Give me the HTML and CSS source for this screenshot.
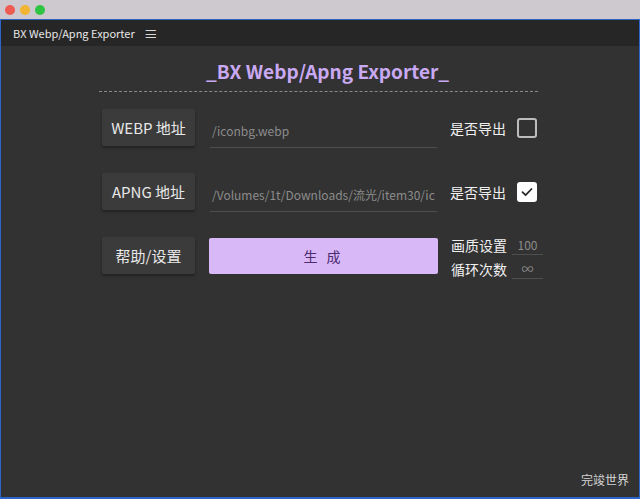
FILE: index.html
```html
<!DOCTYPE html>
<html lang="zh">
<head>
    <meta charset="UTF-8">
    <meta name="viewport" content="width=device-width, initial-scale=1.0">
    <title>BX Webp/Apng Exporter</title>
    <link rel="stylesheet" href="styles.css">
</head>
<body>
    <div class="titlebar">
        <span class="light red"></span>
        <span class="light yellow"></span>
        <span class="light green"></span>
    </div>
    <div class="panel">
        <div class="tabbar">
            <span class="tab-name">BX Webp/Apng Exporter</span>
            <span class="tab-menu">&#8801;</span>
        </div>
        <div class="content">
            <h1 class="heading">_BX Webp/Apng Exporter_</h1>
            <div class="divider"></div>
            <div class="rows">
                <div class="row">
                    <button class="btn">WEBP 地址</button>
                    <input type="text" class="path" value="/iconbg.webp">
                    <div class="export">
                        <span class="label">是否导出</span>
                        <span class="check"></span>
                    </div>
                </div>
                <div class="row">
                    <button class="btn">APNG 地址</button>
                    <input type="text" class="path" value="/Volumes/1t/Downloads/流光/item30/icon">
                    <div class="export">
                        <span class="label">是否导出</span>
                        <span class="check on">
                            <svg width="14" height="14" viewBox="0 0 14 14"><path d="M2.5 7.2 L5.6 10.2 L11.5 4" fill="none" stroke="#2a2a2a" stroke-width="1.8" stroke-linecap="round" stroke-linejoin="round"/></svg>
                        </span>
                    </div>
                </div>
                <div class="row">
                    <button class="btn">帮助/设置</button>
                    <button class="generate">生 成</button>
                    <div class="options">
                        <div class="option">
                            <span class="label">画质设置</span>
                            <input type="text" class="small" value="100">
                        </div>
                        <div class="option">
                            <span class="label">循环次数</span>
                            <input type="text" class="small" value="∞">
                        </div>
                    </div>
                </div>
            </div>
            <div class="footer">完竣世界</div>
        </div>
    </div>
</body>
</html>
```

FILE: styles.css
```css
body {
    margin: 0;
    width: 640px;
    height: 499px;
    overflow: hidden;
    background: #cbc7cc;
    font-family: "Noto Sans CJK SC", "Noto Sans", sans-serif;
    display: flex;
    flex-direction: column;
}
.titlebar {
    height: 19px;
    display: flex;
    align-items: center;
    gap: 5px;
    padding-left: 5px;
    background: #cdc9ce;
}
.light {
    width: 10px;
    height: 10px;
    border-radius: 50%;
}
.red { background: #ee5b53; }
.yellow { background: #f2b533; }
.green { background: #2fc443; }
.panel {
    flex: 1;
    display: flex;
    flex-direction: column;
    border: 1px solid #2c64c8;
    border-bottom-width: 2px;
    background: #323232;
}
.tabbar {
    height: 26px;
    display: flex;
    align-items: center;
    gap: 9px;
    padding-left: 12px;
    background: #262626;
    color: #e6e6e6;
    font-size: 11px;
}
.tab-menu {
    font-size: 14px;
    color: #d8d8d8;
}
.content {
    flex: 1;
    display: flex;
    flex-direction: column;
    padding: 0 101px 0 98px;
}
.heading {
    margin: 14px 0 0;
    text-align: center;
    padding-left: 18px;
    font-size: 19px;
    font-weight: bold;
    color: #c9a9f2;
    line-height: 22px;
}
.divider {
    margin-top: 9px;
    border-top: 1px dashed #8a8a8a;
}
.rows {
    display: flex;
    flex-direction: column;
    gap: 27px;
    margin-top: 17px;
    padding-left: 3px;
}
.row {
    display: flex;
    align-items: center;
    height: 37px;
    white-space: nowrap;
}
.btn {
    flex-shrink: 0;
    width: 93px;
    height: 37px;
    border: none;
    border-radius: 2px;
    background: #3b3b3b;
    color: #e8e8e8;
    font-family: inherit;
    font-size: 15px;
    box-shadow: 0 2px 3px rgba(0, 0, 0, 0.35);
    padding: 0;
}
.path {
    flex-shrink: 0;
    width: 227px;
    margin-left: 15px;
    box-sizing: border-box;
    height: 35px;
    margin-top: 6px;
    padding: 0 2px;
    border: none;
    border-bottom: 1px solid #4e4e4e;
    background: transparent;
    color: #8c8c8c;
    font-family: inherit;
    font-size: 12px;
    outline: none;
}
.export {
    flex-shrink: 0;
    display: flex;
    align-items: center;
    margin-left: 13px;
    gap: 11px;
}
.label {
    color: #f0f0f0;
    font-size: 14px;
}
.check {
    width: 16px;
    height: 16px;
    border: 2px solid #bcbcbc;
    border-radius: 3px;
    display: flex;
    align-items: center;
    justify-content: center;
}
.check.on {
    background: #ffffff;
    border-color: #ffffff;
}
.generate {
    flex-shrink: 0;
    width: 229px;
    height: 36px;
    margin-left: 14px;
    border: none;
    border-radius: 2px;
    background: #d9b8f8;
    color: #4b2a6e;
    font-family: inherit;
    font-size: 14px;
    letter-spacing: 3px;
    padding: 0;
}
.options {
    flex-shrink: 0;
    display: flex;
    flex-direction: column;
    gap: 2px;
    margin-left: 13px;
    margin-top: 3px;
}
.option {
    display: flex;
    align-items: center;
    gap: 5px;
    height: 22px;
}
.small {
    width: 31px;
    box-sizing: border-box;
    height: 20px;
    border: none;
    border-bottom: 1px solid #4e4e4e;
    background: transparent;
    color: #8c8c8c;
    text-align: center;
    font-family: inherit;
    font-size: 12px;
    padding: 0;
    outline: none;
}
.footer {
    margin-top: auto;
    margin-right: -91px;
    margin-bottom: 9px;
    align-self: flex-end;
    color: #d6d6d6;
    font-size: 12px;
}
```
